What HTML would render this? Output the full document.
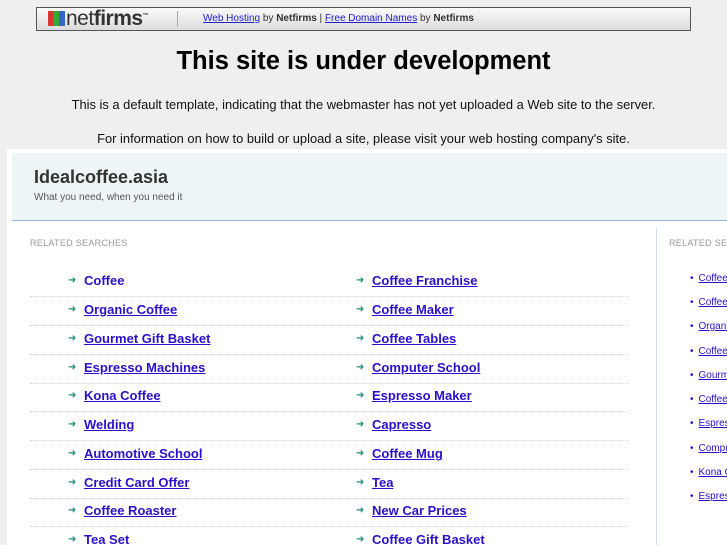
<!DOCTYPE html>
<html><head><meta charset="utf-8"><style>
html,body{margin:0;width:727px;height:545px;overflow:hidden}
body{background:#efefef;font-family:"Liberation Sans",sans-serif;position:relative}
.wrap{position:absolute;left:0;top:0;width:727px;height:545px;overflow:hidden}
.bar{position:absolute;left:36px;top:7px;width:653px;height:22px;border:1px solid #555;background:linear-gradient(#fafafa,#dcdcdc);}
.logo{position:absolute;left:11px;top:-1px;font-size:21px;font-weight:bold;color:#333;letter-spacing:-0.5px;white-space:nowrap}
.logo .ic{display:inline-block;width:17px;height:15px;background:linear-gradient(90deg,#d33 0 33%,#3a3 33% 66%,#36c 66%);vertical-align:-1px;margin-right:1px}
.logo span.n{font-weight:normal}
.sep{position:absolute;left:140px;top:3px;width:1px;height:16px;background:#aaa}
.bl{position:absolute;left:166px;top:5px;font-size:10px;color:#333;white-space:nowrap}
.bl a{color:#22c;text-decoration:underline}
h1{position:absolute;left:0;width:727px;text-align:center;top:47px;margin:0;font-size:25.5px;color:#000}
.p{position:absolute;left:0;width:727px;text-align:center;font-size:12.9px;color:#111}
.frame{position:absolute;left:7px;top:149px;width:720px;height:396px;background:#fff}
.hdr{position:absolute;left:12px;top:153px;width:715px;height:67px;background:#eef5f7;border-bottom:1px solid #9ab4e0}
.t{position:absolute;left:34px;top:167px;font-size:18px;font-weight:bold;color:#333}
.tg{position:absolute;left:34px;top:192px;font-size:10px;color:#555}
.lab{position:absolute;top:238px;font-size:9px;color:#999;letter-spacing:0.3px;white-space:nowrap}
.row{position:absolute;left:30px;width:598px;height:29px;border-bottom:1px dotted #c5d3ee}
.it{position:absolute;font-size:13px;font-weight:bold;color:#2a10cc;text-decoration:underline;top:6px;white-space:nowrap}
.ar{position:absolute;top:8px;color:#2a8a7a;font-size:10px}
.vd{position:absolute;left:656px;top:228px;width:1px;height:317px;background:#cfdcef}
.rc{position:absolute;left:657px;top:228px;width:70px;height:317px;overflow:hidden}
.rc .lab{left:12px;top:10px}
.r{position:absolute;left:33px;font-size:10px;color:#2a10cc;white-space:nowrap}
.r a{color:#2a10cc;text-decoration:underline;margin-left:5px}
</style></head><body><div class="wrap">
<div class="bar"><div class="logo"><span class="ic"></span><span class="n">net</span>firms<sup style="font-size:6px">™</sup></div><div class="sep"></div>
<div class="bl"><a>Web Hosting</a> by <b>Netfirms</b> | <a>Free Domain Names</a> by <b>Netfirms</b></div></div>
<h1>This site is under development</h1>
<div class="p" style="top:97px">This is a default template, indicating that the webmaster has not yet uploaded a Web site to the server.</div>
<div class="p" style="top:131px">For information on how to build or upload a site, please visit your web hosting company's site.</div>
<div class="frame"></div>
<div class="hdr"></div>
<div class="t">Idealcoffee.asia</div>
<div class="tg">What you need, when you need it</div>
<div class="lab" style="left:30px">RELATED SEARCHES</div>
<div class="vd"></div>
<div class="row" style="top:267px"><span class="ar" style="left:38px">➜</span><span class="it" style="left:54px;text-decoration:none">Coffee</span><span class="ar" style="left:326px">➜</span><span class="it" style="left:342px">Coffee Franchise</span></div>
<div class="row" style="top:296px"><span class="ar" style="left:38px">➜</span><span class="it" style="left:54px">Organic Coffee</span><span class="ar" style="left:326px">➜</span><span class="it" style="left:342px">Coffee Maker</span></div>
<div class="row" style="top:325px"><span class="ar" style="left:38px">➜</span><span class="it" style="left:54px">Gourmet Gift Basket</span><span class="ar" style="left:326px">➜</span><span class="it" style="left:342px">Coffee Tables</span></div>
<div class="row" style="top:354px"><span class="ar" style="left:38px">➜</span><span class="it" style="left:54px">Espresso Machines</span><span class="ar" style="left:326px">➜</span><span class="it" style="left:342px">Computer School</span></div>
<div class="row" style="top:382px"><span class="ar" style="left:38px">➜</span><span class="it" style="left:54px">Kona Coffee</span><span class="ar" style="left:326px">➜</span><span class="it" style="left:342px">Espresso Maker</span></div>
<div class="row" style="top:411px"><span class="ar" style="left:38px">➜</span><span class="it" style="left:54px">Welding</span><span class="ar" style="left:326px">➜</span><span class="it" style="left:342px">Capresso</span></div>
<div class="row" style="top:440px"><span class="ar" style="left:38px">➜</span><span class="it" style="left:54px">Automotive School</span><span class="ar" style="left:326px">➜</span><span class="it" style="left:342px">Coffee Mug</span></div>
<div class="row" style="top:469px"><span class="ar" style="left:38px">➜</span><span class="it" style="left:54px">Credit Card Offer</span><span class="ar" style="left:326px">➜</span><span class="it" style="left:342px">Tea</span></div>
<div class="row" style="top:497px"><span class="ar" style="left:38px">➜</span><span class="it" style="left:54px">Coffee Roaster</span><span class="ar" style="left:326px">➜</span><span class="it" style="left:342px">New Car Prices</span></div>
<div class="row" style="top:526px;height:18px;border-bottom:none"><span class="ar" style="left:38px">➜</span><span class="it" style="left:54px">Tea Set</span><span class="ar" style="left:326px">➜</span><span class="it" style="left:342px">Coffee Gift Basket</span></div>
<div class="rc">
<div class="lab">RELATED SEARCHES</div>
<div class="r" style="top:45px">•<a>Coffee</a></div>
<div class="r" style="top:69px">•<a>Coffee</a></div>
<div class="r" style="top:93px">•<a>Organic</a></div>
<div class="r" style="top:118px">•<a>Coffee</a></div>
<div class="r" style="top:142px">•<a>Gourmet</a></div>
<div class="r" style="top:166px">•<a>Coffee</a></div>
<div class="r" style="top:190px">•<a>Espresso</a></div>
<div class="r" style="top:215px">•<a>Computer</a></div>
<div class="r" style="top:239px">•<a>Kona Coffee</a></div>
<div class="r" style="top:263px">•<a>Espresso</a></div>
</div>
</div></body></html>
